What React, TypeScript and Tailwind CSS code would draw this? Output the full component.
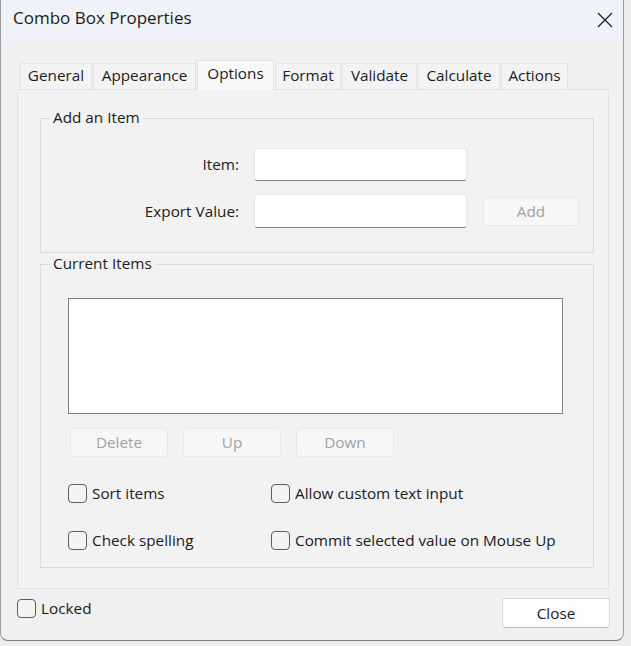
import React from "react"

const tabs = [
  { label: "General", w: "w-[72px]" },
  { label: "Appearance", w: "w-[103px]" },
  { label: "Options", w: "w-[77px]", active: true },
  { label: "Format", w: "w-[66px]" },
  { label: "Validate", w: "w-[75px]" },
  { label: "Calculate", w: "w-[82px]" },
  { label: "Actions", w: "w-[67px]" },
]

function Checkbox({ label }: { label: string }) {
  return (
    <label className="flex items-center gap-[5px] h-[20px]">
      <span className="w-[19px] h-[19px] rounded-[4px] border border-[#5c5c5c] bg-[#f4f4f4] shrink-0" />
      <span className="leading-[20px]">{label}</span>
    </label>
  )
}

function DisabledButton({ label }: { label: string }) {
  return (
    <button className="w-[98px] h-[29px] rounded-[4px] border border-[#e9e9e9] bg-[#f7f7f7] text-[#a2a2a2]">
      {label}
    </button>
  )
}

export default function App() {
  return (
    <div className="w-[631px] h-[646px] bg-[#ececec] font-['Open_Sans',sans-serif] text-[15.3px] text-[#1b1b1b]">
      <div className="w-[624px] h-[641px] flex flex-col bg-[#f0f0f0] border-x border-b border-x-[#9a9a9a] border-b-[#7a7a7a] rounded-b-[8px] overflow-hidden">
        {/* Title bar */}
        <div className="h-[40px] shrink-0 bg-[#eff3f7] flex items-center justify-between pl-[12px] pr-[10px] pb-[4px]">
          <span className="text-[17px] leading-[24px]">Combo Box Properties</span>
          <svg width="16" height="16" viewBox="0 0 16 16" className="text-[#1a1a1a] mt-[3px]">
            <path d="M1 1L15 15M15 1L1 15" stroke="currentColor" strokeWidth="1.2" fill="none" />
          </svg>
        </div>

        {/* Tabs + panel */}
        <div className="pl-[16px] pr-[14px] pt-[19px]">
          <div className="flex items-end h-[30px] pl-[3px] gap-px">
            {tabs.map((t) =>
              t.active ? (
                <div
                  key={t.label}
                  className={`${t.w} h-[30px] -mb-px relative z-10 bg-[#f9f9f9] border border-b-0 border-[#e2e2e2] flex justify-center pt-[1px] leading-[22px]`}
                >
                  {t.label}
                </div>
              ) : (
                <div
                  key={t.label}
                  className={`${t.w} h-[26px] bg-[#f3f3f3] border border-b-0 border-[#e4e4e4] flex items-center justify-center leading-[20px] pb-[3px]`}
                >
                  {t.label}
                </div>
              )
            )}
          </div>

          <div className="h-[500px] border border-[#e2e2e2] bg-[#f2f2f2] pt-[28px] pl-[22px] pr-[14px]">
            {/* Add an Item */}
            <div className="relative h-[135px] border border-[#dadada] pt-[29px]">
              <span className="absolute -top-[12px] left-[9px] px-[3px] bg-[#f2f2f2] leading-[20px]">
                Add an Item
              </span>
              <div className="grid grid-cols-[198px_213px_97px] gap-x-[15px] gap-y-[13px] items-center">
                <span className="text-right">Item:</span>
                <div className="h-[33px] bg-white rounded-[3px] border border-[#e6e6e6] border-b-[#808080]" />
                <span />
                <span className="text-right">Export Value:</span>
                <div className="h-[34px] bg-white rounded-[3px] border border-[#e6e6e6] border-b-[#808080]" />
                <button className="ml-px h-[29px] rounded-[4px] border border-[#e9e9e9] bg-[#f7f7f7] text-[#a2a2a2]">
                  Add
                </button>
              </div>
            </div>

            {/* Current Items */}
            <div className="relative mt-[11px] h-[304px] border border-[#dadada] pt-[33px] pl-[27px]">
              <span className="absolute -top-[12px] left-[9px] px-[3px] bg-[#f2f2f2] leading-[20px]">
                Current Items
              </span>
              <div className="w-[495px] h-[116px] border border-[#7f7f7f] bg-white" />
              <div className="flex gap-[15px] mt-[14px] ml-[2px]">
                <DisabledButton label="Delete" />
                <DisabledButton label="Up" />
                <DisabledButton label="Down" />
              </div>
              <div className="grid grid-cols-[203px_auto] gap-y-[27px] mt-[26px]">
                <Checkbox label="Sort items" />
                <Checkbox label="Allow custom text input" />
                <Checkbox label="Check spelling" />
                <Checkbox label="Commit selected value on Mouse Up" />
              </div>
            </div>
          </div>
        </div>

        {/* Footer */}
        <div className="flex justify-between items-start pt-[9px] pl-[16px] pr-[13px]">
          <Checkbox label="Locked" />
          <button className="w-[108px] h-[30px] rounded-[4px] border border-[#d6d6d6] border-b-[#bcbcbc] bg-[#fdfdfd]">
            Close
          </button>
        </div>
      </div>
    </div>
  )
}
